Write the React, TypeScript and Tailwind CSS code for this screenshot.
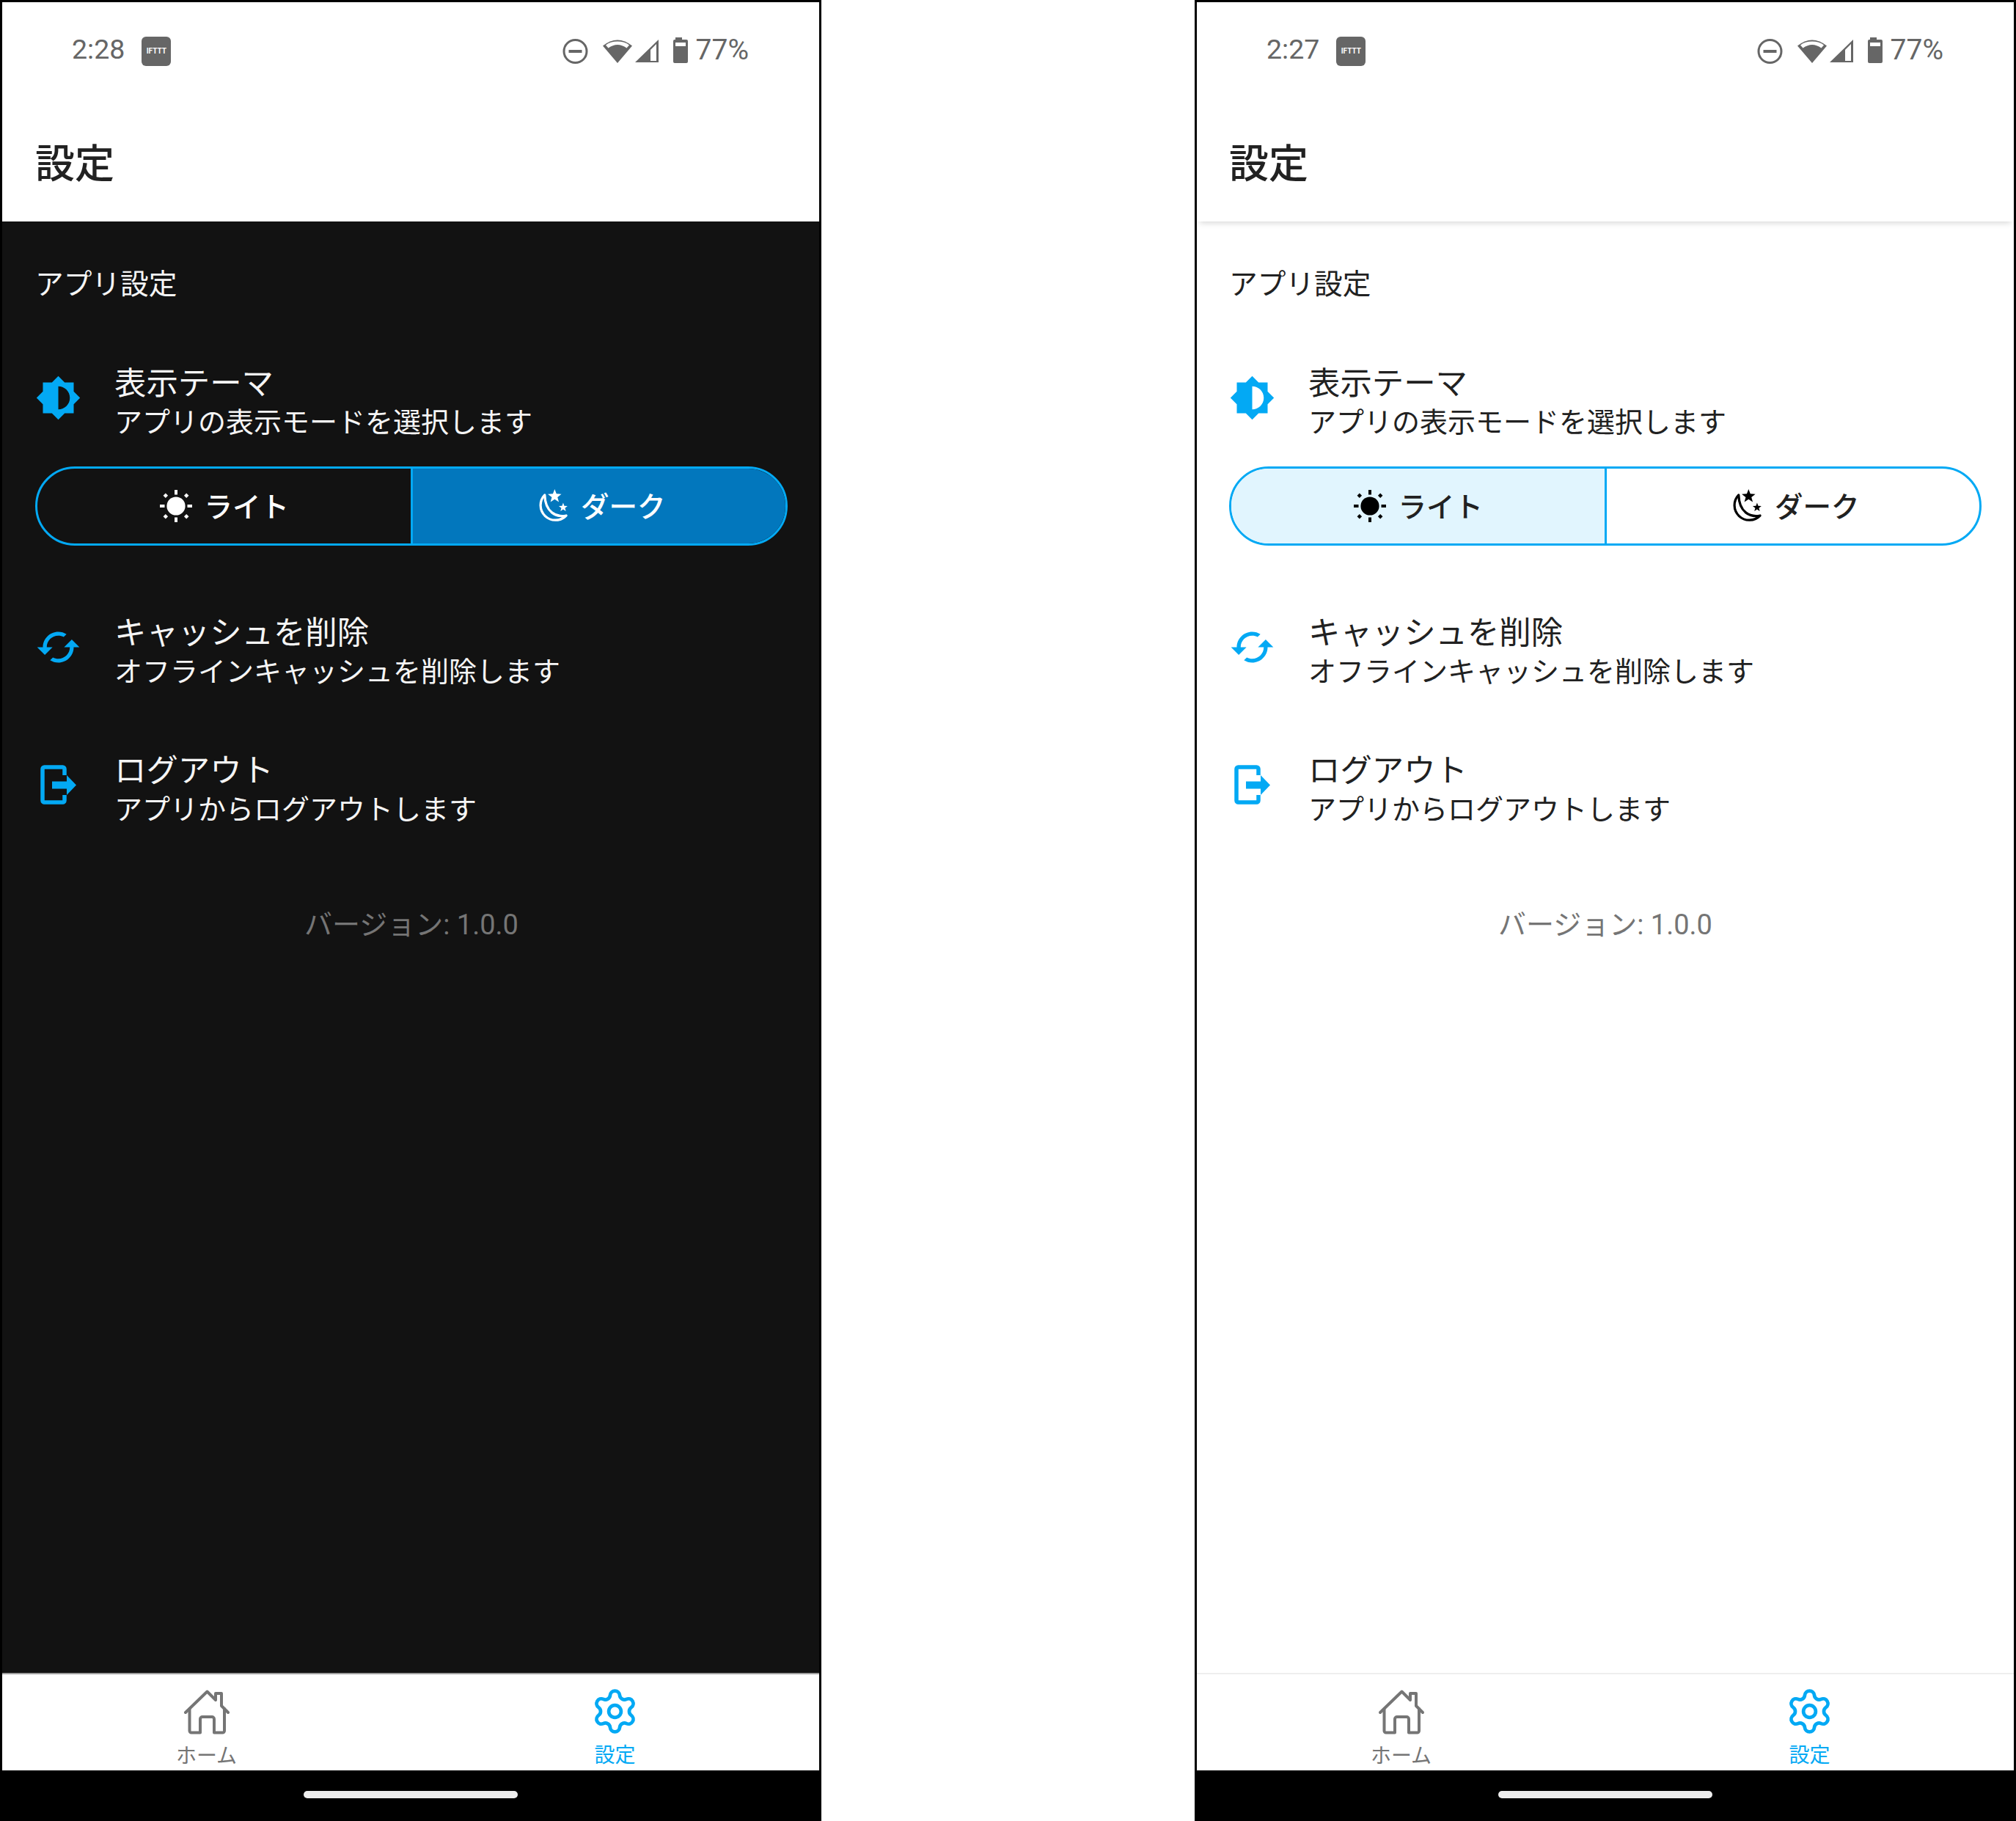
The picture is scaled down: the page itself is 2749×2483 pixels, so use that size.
import { Settings } from "lucide-react";

const font = { fontFamily: '"Roboto", "Noto Sans CJK JP", sans-serif' };

function starPoints(cx: number, cy: number, r: number) {
  const pts: string[] = [];
  for (let i = 0; i < 10; i++) {
    const rad = i % 2 === 0 ? r : r * 0.42;
    const a = -Math.PI / 2 + (i * Math.PI) / 5;
    pts.push(`${(cx + rad * Math.cos(a)).toFixed(2)},${(cy + rad * Math.sin(a)).toFixed(2)}`);
  }
  return pts.join(" ");
}

function Sun({ color }: { color: string }) {
  return (
    <svg viewBox="0 0 48 48" className="h-[48px] w-[48px] shrink-0" fill={color}>
      <circle cx="24" cy="24" r="12.6" />
      <rect x="22" y="2" width="4" height="6.5" />
      <rect x="22" y="39.5" width="4" height="6.5" />
      <rect x="2" y="22" width="6.5" height="4" />
      <rect x="39.5" y="22" width="6.5" height="4" />
      <rect x="7.5" y="7.5" width="4.6" height="4.6" transform="rotate(45 9.8 9.8)" />
      <rect x="35.9" y="7.5" width="4.6" height="4.6" transform="rotate(45 38.2 9.8)" />
      <rect x="7.5" y="35.9" width="4.6" height="4.6" transform="rotate(45 9.8 38.2)" />
      <rect x="35.9" y="35.9" width="4.6" height="4.6" transform="rotate(45 38.2 38.2)" />
    </svg>
  );
}

function Moon({ color }: { color: string }) {
  return (
    <svg viewBox="0 0 48 48" className="h-[52px] w-[52px] shrink-0">
      <path
        d="M15.5 10 A17.5 17.5 0 1 0 42.5 36 C30 38.5 16 32 15.5 10 Z"
        fill="none"
        stroke={color}
        strokeWidth="3"
        strokeLinejoin="round"
      />
      <polygon points={starPoints(28, 11.7, 9)} fill={color} />
      <polygon points={starPoints(38.7, 25.7, 5.8)} fill={color} />
    </svg>
  );
}

function BrightnessIcon() {
  return (
    <svg viewBox="0 0 24 24" className="h-[63px] w-[63px]" fill="#03A9F4">
      <path d="M20 15.31L23.31 12 20 8.69V4h-4.69L12 .69 8.69 4H4v4.69L.69 12 4 15.31V20h4.69L12 23.31 15.31 20H20v-4.69zM12 18V6c3.31 0 6 2.69 6 6s-2.69 6-6 6z" />
    </svg>
  );
}

function CachedIcon() {
  return (
    <svg viewBox="0 0 24 24" className="h-[63px] w-[63px]" fill="#03A9F4">
      <path d="M19 8l-4 4h3c0 3.31-2.69 6-6 6-1.01 0-1.97-.25-2.8-.7l-1.46 1.46C8.97 19.54 10.43 20 12 20c4.42 0 8-3.58 8-8h3l-4-4zM6 12c0-3.31 2.69-6 6-6 1.01 0 1.97.25 2.8.7l1.46-1.46C15.03 4.46 13.57 4 12 4c-4.42 0-8 3.58-8 8H1l4 4 4-4H6z" />
    </svg>
  );
}

function LogoutIcon() {
  return (
    <svg viewBox="0 0 63 63" className="h-[63px] w-[63px]">
      <path
        d="M40 18 V9.5 a2.5 2.5 0 0 0 -2.5 -2.5 H12.5 a2.5 2.5 0 0 0 -2.5 2.5 V52.5 a2.5 2.5 0 0 0 2.5 2.5 H37.5 a2.5 2.5 0 0 0 2.5 -2.5 V45"
        fill="none"
        stroke="#03A9F4"
        strokeWidth="5.5"
      />
      <path d="M23 26.5 H43 V18 L56 31.5 L43 45 V36.5 H23 Z" fill="#03A9F4" />
    </svg>
  );
}

function HomeIcon() {
  return (
    <svg viewBox="0 0 64 64" className="h-[64px] w-[64px]" fill="none" stroke="#757575" strokeWidth="4" strokeLinejoin="round" strokeLinecap="round">
      <path d="M3 32 L32.5 3.5 L44 15 V6 H52 V23 L61 32" />
      <path d="M8.5 27 V57 a2.5 2.5 0 0 0 2.5 2.5 H23 V41 a3 3 0 0 1 3 -3 H39 a3 3 0 0 1 3 3 V59.5 H53.5 a2.5 2.5 0 0 0 2.5 -2.5 V27" />
    </svg>
  );
}

function StatusIcons() {
  return (
    <svg viewBox="0 0 172 40" className="h-[40px] w-[172px]" fill="#666666">
      <circle cx="17.5" cy="20" r="15.5" fill="none" stroke="#666666" strokeWidth="3" />
      <rect x="8.5" y="18" width="18" height="4" />
      <path d="M75 36 L55 12.5 Q75 -3.5 95 12.5 Z" />
      <path d="M75 6.5 Q65 6.5 59 11.5 L62.5 15.5 Q75 6.5 87.5 15.5 L91 11.5 Q85 6.5 75 6.5 Z" fill="#ffffff" />
      <path fillRule="evenodd" d="M99 35 L131 4 V35 Z M120 33 H128 V10 L120 18 Z" />
      <path d="M154 1 H163 V4 H169 a2 2 0 0 1 2 2 V34 a2 2 0 0 1 -2 2 H153 a2 2 0 0 1 -2 -2 V6 a2 2 0 0 1 2 -2 H154 Z" />
      <rect x="154" y="8" width="14" height="5" fill="#ffffff" />
    </svg>
  );
}

function Row({
  icon,
  title,
  sub,
  rowClass,
  textColor,
}: {
  icon: React.ReactNode;
  title: string;
  sub: string;
  rowClass: string;
  textColor: string;
}) {
  return (
    <div className={`flex items-center ${rowClass}`}>
      <div className="mr-[45px] -mt-[16px] shrink-0">{icon}</div>
      <div className={textColor}>
        <div className="text-[43.4px] leading-[53px]">{title}</div>
        <div className="text-[38px] leading-[53px]">{sub}</div>
      </div>
    </div>
  );
}

function Phone({ dark, time }: { dark: boolean; time: string }) {
  const textColor = dark ? "text-[#f5f5f5]" : "text-[#212121]";
  const iconColor = dark ? "#ffffff" : "#000000";
  const btnText = dark ? "text-white" : "text-[#212121]";
  return (
    <div
      className="flex h-[2483px] w-[1120px] flex-col border-[3px] border-black bg-white"
      style={font}
    >
      <div className="flex h-[133px] shrink-0 items-center justify-between pr-[96px] pl-[95px]">
        <div className="flex items-center gap-[23px]">
          <span className="-mt-[3px] text-[37.5px] leading-none text-[#666666]">{time}</span>
          <span className="flex h-[40px] w-[40px] items-center justify-center rounded-[6px] bg-[#666666] text-[10px] font-bold text-white">
            IFTTT
          </span>
        </div>
        <div className="flex items-center gap-[10px]">
          <StatusIcons />
          <span className="-mt-[3px] text-[39px] leading-none text-[#666666]">77%</span>
        </div>
      </div>
      <div
        className={`z-10 flex h-[166px] shrink-0 items-center pt-[11px] text-[54px] font-medium text-[#212121] ${
          dark ? "pl-[45px]" : "pl-[44px] shadow-[0_6px_8px_-4px_rgba(0,0,0,0.16)]"
        }`}
      >
        設定
      </div>
      <div
        className={`flex flex-1 flex-col ${
          dark ? "bg-[#121212] pr-[43px] pl-[45px]" : "bg-white pr-[44px] pl-[44px]"
        }`}
      >
        <div className={`mt-[59px] text-[38.7px] leading-[53px] ${textColor}`}>アプリ設定</div>
        <Row
          rowClass="mt-[83px]"
          icon={<BrightnessIcon />}
          title="表示テーマ"
          sub="アプリの表示モードを選択します"
          textColor={textColor}
        />
        <div className="mt-[33px] flex h-[108px] overflow-hidden rounded-[54px] border-[3px] border-[#03A9F4]">
          <div
            className={`flex flex-1 items-center justify-center gap-[14px] border-r-[3px] border-[#03A9F4] ${
              dark ? "" : "bg-[#E1F5FE]"
            }`}
          >
            <Sun color={iconColor} />
            <span className={`mt-[4px] text-[38.5px] font-medium ${btnText}`}>ライト</span>
          </div>
          <div className={`flex flex-1 items-center justify-center gap-[14px] ${dark ? "bg-[#0277BD]" : ""}`}>
            <Moon color={iconColor} />
            <span className={`mt-[4px] text-[38.5px] font-medium ${btnText}`}>ダーク</span>
          </div>
        </div>
        <Row
          rowClass="mt-[93px]"
          icon={<CachedIcon />}
          title="キャッシュを削除"
          sub="オフラインキャッシュを削除します"
          textColor={textColor}
        />
        <Row
          rowClass="mt-[82px]"
          icon={<LogoutIcon />}
          title="ログアウト"
          sub="アプリからログアウトします"
          textColor={textColor}
        />
        <div className="mt-[104px] text-center text-[38px] leading-[53px] text-[#757575]">
          バージョン: 1.0.0
        </div>
      </div>
      <div
        className={`flex h-[133px] shrink-0 border-t-[2px] bg-white ${
          dark ? "border-[#9e9e9e]" : "border-[#eeeeee]"
        }`}
      >
        <div className="flex flex-1 flex-col items-center pt-[20px]">
          <HomeIcon />
          <span className="mt-[10px] text-[28px] leading-[36px] text-[#757575]">ホーム</span>
        </div>
        <div className="flex flex-1 flex-col items-center pt-[17px]">
          <Settings className="h-[67px] w-[67px] text-[#03A9F4]" strokeWidth={1.7} />
          <span className="mt-[9px] text-[28px] leading-[36px] text-[#03A9F4]">設定</span>
        </div>
      </div>
      <div className="flex h-[66px] shrink-0 items-center justify-center bg-black">
        <div className="mt-[-1px] h-[10px] w-[292px] rounded-full bg-[#eeeeee]" />
      </div>
    </div>
  );
}

export default function App() {
  return (
    <div className="flex h-[2483px] w-[2749px] justify-between overflow-hidden bg-white">
      <Phone dark time="2:28" />
      <Phone dark={false} time="2:27" />
    </div>
  );
}
